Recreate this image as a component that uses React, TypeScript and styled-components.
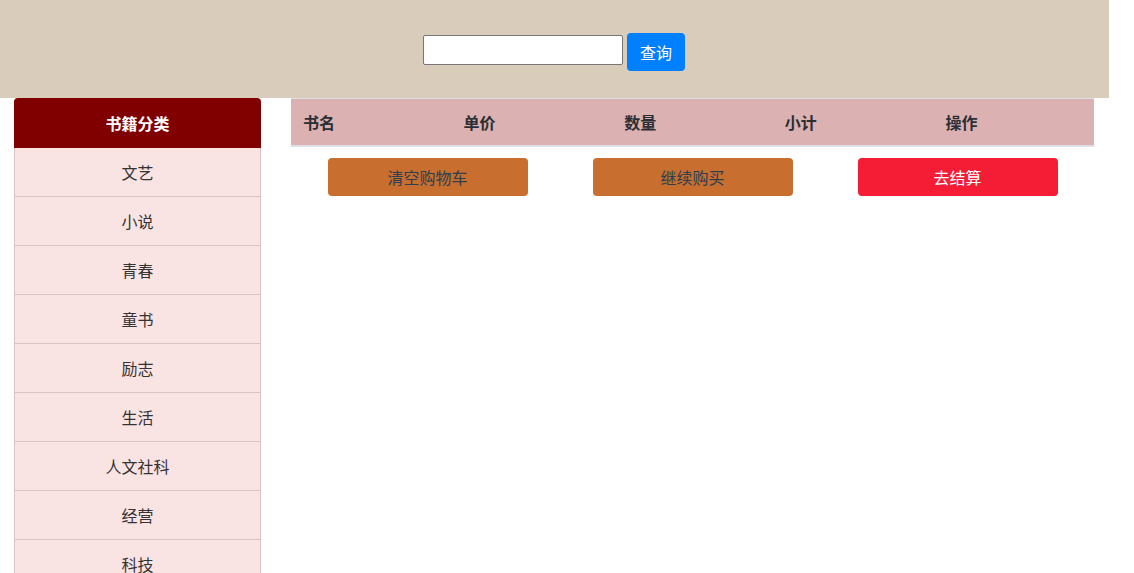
import styled, { createGlobalStyle } from "styled-components";

const categories = ["文艺", "小说", "青春", "童书", "励志", "生活", "人文社科", "经营", "科技"];
const columns = ["书名", "单价", "数量", "小计", "操作"];

const App = () => {
  return (
    <>
      <GlobalStyle />
      <Page>
        <Header>
          <SearchInput type="text" />
          <SearchButton>查询</SearchButton>
        </Header>
        <Main>
          <Sidebar>
            <SideTitle>书籍分类</SideTitle>
            {categories.map((c) => (
              <SideItem key={c}>{c}</SideItem>
            ))}
          </Sidebar>
          <Content>
            <Table>
              <thead>
                <tr>
                  {columns.map((c) => (
                    <Th key={c}>{c}</Th>
                  ))}
                </tr>
              </thead>
            </Table>
            <Actions>
              <ActionButton variant="orange">清空购物车</ActionButton>
              <ActionButton variant="orange">继续购买</ActionButton>
              <ActionButton variant="red">去结算</ActionButton>
            </Actions>
          </Content>
        </Main>
      </Page>
    </>
  );
};

export default App;

const GlobalStyle = createGlobalStyle`
  * {
    box-sizing: border-box;
  }
  body {
    margin: 0;
    font-family: "Microsoft YaHei", "Noto Sans CJK SC", "Liberation Sans", sans-serif;
    font-size: 16px;
    color: #2c3e50;
    background: #fff;
    overflow: hidden;
  }
`;

const Page = styled.div`
  width: 1109px;
`;

const Header = styled.div`
  height: 98px;
  background-color: #d9ccba;
  display: flex;
  justify-content: center;
  align-items: flex-start;
  gap: 4px;
  padding-top: 33px;
  padding-right: 1px;
`;

const SearchInput = styled.input`
  width: 200px;
  height: 30px;
  margin-top: 2px;
  border: 1px solid #767676;
  border-radius: 2px;
  background: #fff;
`;

const SearchButton = styled.button`
  width: 58px;
  height: 38px;
  border: none;
  border-radius: 4px;
  background-color: #007fff;
  color: #fff;
  font-family: inherit;
  font-size: 16px;
  padding: 0;
`;

const Main = styled.div`
  display: flex;
  align-items: flex-start;
  padding-left: 14px;
`;

const Sidebar = styled.div`
  width: 247px;
  display: flex;
  flex-direction: column;
`;

const SideTitle = styled.div`
  height: 50px;
  background-color: #800000;
  color: #fff;
  font-weight: bold;
  border-radius: 4px 4px 0 0;
  display: flex;
  align-items: center;
  justify-content: center;
`;

const SideItem = styled.div`
  height: 49px;
  background-color: #fae3e3;
  color: #333;
  border: 1px solid #dcc4c4;
  border-top: none;
  display: flex;
  align-items: center;
  justify-content: center;
`;

const Content = styled.div`
  width: 803px;
  margin-left: 30px;
`;

const Table = styled.table`
  width: 100%;
  border-collapse: collapse;
  table-layout: fixed;
  border-top: 1px solid #dee2e6;
`;

const Th = styled.th`
  height: 47px;
  padding: 0 12px;
  text-align: left;
  background-color: #dcb1b1;
  color: #2a2f36;
  font-weight: bold;
  font-size: 16px;
  border-bottom: 2px solid #dee2e6;
`;

const Actions = styled.div`
  display: flex;
  justify-content: center;
  gap: 65px;
  margin-top: 11px;
`;

const ActionButton = styled.button<{ variant: "orange" | "red" }>`
  width: 200px;
  height: 38px;
  border: none;
  border-radius: 4px;
  font-family: inherit;
  font-size: 16px;
  background-color: ${(p) => (p.variant === "red" ? "#f51c36" : "#c86e2f")};
  color: ${(p) => (p.variant === "red" ? "#fff" : "#2c3e50")};
`;
